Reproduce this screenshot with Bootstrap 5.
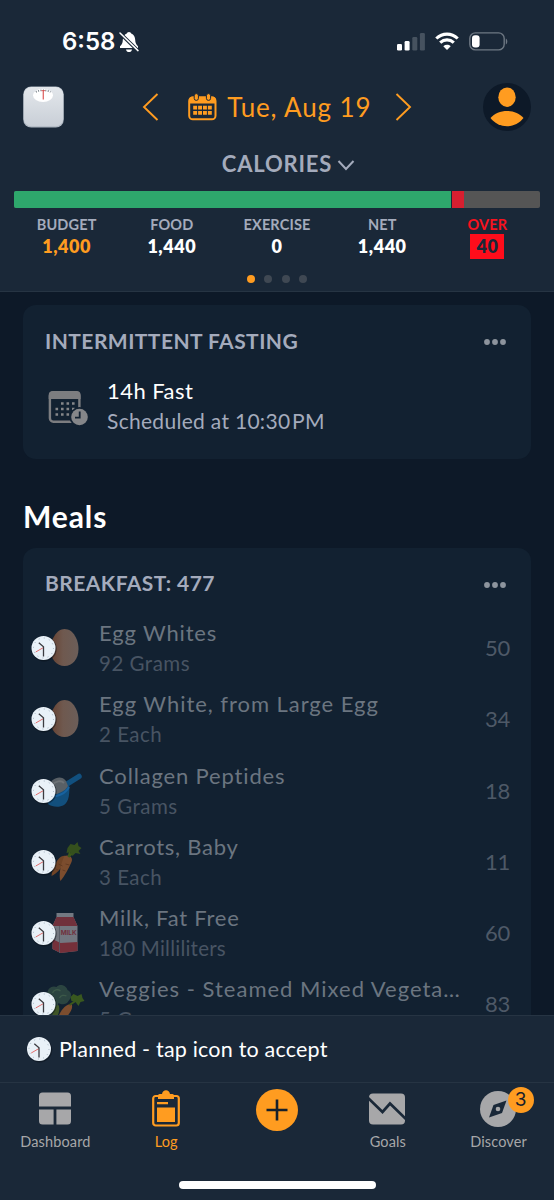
<!DOCTYPE html>
<html lang="en">
<head>
<meta charset="utf-8">
<meta name="viewport" content="width=device-width, initial-scale=1">
<title>Food Log</title>
<link href="https://cdn.jsdelivr.net/npm/bootstrap@5.3.0/dist/css/bootstrap.min.css" rel="stylesheet">
<style>
:root{--panel:#1a2838;--page:#0d1928;--tile:#122131;--orange:#ff9c20;--soft:#a4abbc;--grey:#a7a7a9}
body{font-family:Lato,"Open Sans",sans-serif;background:var(--page);color:#fff;height:1200px;white-space:nowrap}
svg{display:block;flex-shrink:0}
.panel{background:var(--panel)}
.topbar{height:292px;border-bottom:1px solid #263443}
.status{height:83px;padding:0 46px 0 62px}
.clock-time{font:600 24px/83px Inter,sans-serif}
.date-row{height:48px;padding:0 23px}
.date-text{font-size:26px;letter-spacing:.87px;color:var(--orange);line-height:48px}
.metric{height:30px;margin-top:18px;padding-left:23px;font-size:22px;font-weight:700;letter-spacing:.8px;line-height:30px;color:var(--soft)}
.budget{height:17px;margin:12px 14px 0;background:#555;border-radius:2px}
.budget .progress-bar{background:#2ea76c}
.budget .progress-bar+.progress-bar{background:#d71f30;border-left:1.5px solid var(--panel)}
.stats{margin:7px 14px 0;text-align:center}
.stat-label{font-size:14.5px;font-weight:700;line-height:19px;color:var(--soft);letter-spacing:.15px}
.stat-value{font-size:18px;font-weight:800;line-height:25px;letter-spacing:.55px}
.over{color:#f9121e}
.over-box{background:#ff0d1b;color:#1a2838;width:34px}
.pager i{width:8px;height:8px;border-radius:50%;background:#3f4853}
.pager i:first-child{background:var(--orange)}
.tile{background:var(--tile);border:0;border-radius:13px;color:inherit}
.tile-title{font-size:21px;font-weight:700;line-height:30px;color:var(--soft);letter-spacing:.45px}
.tile-more{margin-top:2px}
.fast-name{font-size:22px;line-height:30px;letter-spacing:.45px}
.fast-sub{font-size:21px;line-height:30px;letter-spacing:.3px;color:var(--soft)}
.meals-title{font-size:30px;font-weight:700;line-height:40px;letter-spacing:.9px}
.food{height:71.3px;padding:0 21px 0 8px}
.food-name{font-size:22px;line-height:30px;letter-spacing:.84px;color:#6b7580}
.food-sub{font-size:20.5px;line-height:30px;letter-spacing:.5px;color:#485463}
.food-cal{font-size:22px;line-height:30px;letter-spacing:-.2px;color:#4e5967}
.planned{height:68px;border-top:1px solid #263443;border-bottom:1px solid #263443;font-size:21.5px;letter-spacing:.2px;padding-left:25px}
.tab{flex:1;font-size:14.5px;line-height:20px;letter-spacing:.13px;color:var(--grey);text-decoration:none}
.tab.active{color:var(--orange)}
.tab-icon{height:49px;padding-top:2px;margin-left:-1px}
.count{position:absolute;left:28px;top:-4px;width:26px;height:26px;border-radius:50%;background:var(--orange);color:#16202b;font:19px/26px Inter,sans-serif;text-align:center}
.home-bar{width:197px;height:8px;border-radius:4px;background:#fff;margin:29px auto 0}
</style>
</head>
<body class="d-flex flex-column overflow-hidden">
<svg width="0" height="0" class="position-absolute" aria-hidden="true">
  <defs>
    <linearGradient id="eggFill"><stop offset="0" stop-color="#664131"/><stop offset=".45" stop-color="#6f594f"/><stop offset="1" stop-color="#6b5e59"/></linearGradient>
    <linearGradient id="scaleFill" x2="0" y2="1"><stop offset="0" stop-color="#e3e7eb"/><stop offset="1" stop-color="#c9cfd7"/></linearGradient>
    <symbol id="clock" viewBox="0 0 28 28">
      <circle cx="14.6" cy="14.8" r="12.6" fill="#060d16" opacity=".45"/>
      <circle cx="14" cy="14" r="12" fill="#e9f1f8"/>
      <circle cx="14" cy="14" r="10" fill="none" stroke="#9fb0bf" stroke-width="1" stroke-dasharray="1 4.236"/>
      <path d="M14 13.5 6.2 18" stroke="#e0605f" stroke-width=".9"/>
      <path d="M9.3 8.8 14 12.800V22.5" fill="none" stroke="#3b3b40" stroke-width="1.3"/>
    </symbol>
    <symbol id="egg" viewBox="0 0 56 52"><path d="M32 7C41 7 46 18 46 27C46 37 40 44 32 44C24 44 18 37 18 27C18 18 24 7 32 7Z" fill="url(#eggFill)"/></symbol>
    <symbol id="scoop" viewBox="0 0 56 52">
      <path d="M34 19 46 11.500" stroke="#11507f" stroke-width="5.5" stroke-linecap="round"/>
      <path d="M15 22 36 19C37 27 36 37 31 40C26 43 19 42 15 39Z" fill="#124f7d"/>
      <path d="M15 22C18 13 28 9 33 16L35 21C32 27 22 31 15 29Z" fill="#596066"/>
      <path d="M19 20C23 16 28 15 31 18" stroke="#6e7377" stroke-width="2" fill="none"/>
      <path d="M15 31C24 33 33 28 36 22" fill="none" stroke="#1762a0" stroke-width="2"/>
    </symbol>
    <symbol id="carrot" viewBox="0 0 56 52">
      <path d="M33 20C27 18 20 30 19 40C24 38 34 28 33 20Z" fill="#704426"/>
      <path d="M32 20C37 18 41 22 39 26C36 33 32 40 28 45C26 40 28 27 32 20Z" fill="#7c4d2e"/>
      <path d="M26 28l4 2M23 33l3 1M33 28l4 1M30 34l3 1" stroke="#5d3720" stroke-width=".8"/>
      <path d="M36 21 44 13M36 21 39 10" stroke="#3c581b" stroke-width="2"/>
      <path d="M35 12 38 8 42 9 45 6 46 10 49 12 46 15 48 18 43 17 40 20 38 16 34 17Z" fill="#35501d"/>
    </symbol>
    <symbol id="milk" viewBox="0 0 56 52">
      <path d="M24 6H41V10H24Z" fill="#737982"/>
      <path d="M24 10H41L45 19V44L28 46 20 42V19Z" fill="#737780"/>
      <path d="M24 10H41L45 19H27L20 19Z" fill="#70313c"/>
      <path d="M20 32 28 36 45 35V44L28 46 20 42Z" fill="#75303a"/>
      <path d="M27 19V46" stroke="#555965" stroke-width=".8"/>
      <text x="28.2" y="28" font-family="Inter, sans-serif" font-weight="700" font-size="6.3" fill="#70303c">MILK</text>
    </symbol>
    <symbol id="veg" viewBox="0 0 56 52">
      <path d="M15 17C14 11 19 7 24 9C28 5 34 8 35 12C40 14 39 20 36 23C34 27 29 27 26 25L22 40 17 37 19 26C16 24 14 21 15 17Z" fill="#2b4440"/>
      <path d="M20 15a5 5 0 0 1 8-2M27 20a5 5 0 0 1 7-2" fill="none" stroke="#3c5949" stroke-width="1.3"/>
      <path d="M20 40C20 32 22 27 26 27C28 31 26 37 23 42Z" fill="#3f5527"/>
      <path d="M25 42C27 33 33 26 39 26C42 31 34 40 27 46Z" fill="#7c4d2e"/>
      <path d="M37 27 46 21" stroke="#3c581b" stroke-width="2"/>
      <path d="M38 19 41 16 45 18 49 16 50 20 52 23 48 24 46 28 43 24 39 23Z" fill="#39581f"/>
    </symbol>
    <symbol id="more" viewBox="0 0 24 8"><g fill="#8d949d"><circle cx="4" cy="4" r="2.9"/><circle cx="12" cy="4" r="2.9"/><circle cx="20" cy="4" r="2.9"/></g></symbol>
  </defs>
</svg>

<header class="topbar panel flex-shrink-0">
  <div class="status d-flex align-items-center">
    <span class="clock-time">6:58</span>
    <svg style="margin-left:3px" width="22" height="22" viewBox="0 0 22 22">
      <path d="M11 1C12.3 1 13 1.8 13.2 2.6C16 3.5 17 6 17.2 9C17.3 12 18.2 13.5 20 15.2V17H2V15.2C4 13.5 4.7 12 4.8 9C5 6 6 3.5 8.8 2.6C9 1.8 9.7 1 11 1Z" fill="#fff"/>
      <path d="M8 18.4H14C13.6 20.4 12.5 21 11 21S8.4 20.4 8 18.4Z" fill="#fff"/>
      <path d="M1.8 2 20.5 20.2" stroke="#1a2838" stroke-width="3.6"/><path d="M2 2 20 19.6" stroke="#fff" stroke-width="1.5" stroke-linecap="round"/>
    </svg>
    <svg class="ms-auto" width="28" height="20" viewBox="0 0 28 20"><rect y="12" width="5" height="6.5" rx="1.3" fill="#fff"/><rect x="7.6" y="9" width="5" height="9.5" rx="1.3" fill="#fff"/><rect x="15.3" y="5" width="5" height="13.5" rx="1.3" fill="#46525f"/><rect x="22.9" y="1" width="5" height="17.5" rx="1.3" fill="#46525f"/></svg>
    <svg style="margin-left:10px" width="24" height="19" viewBox="0 0 24 19" fill="none" stroke="#fff" stroke-width="3.1"><path d="M1.3 6.5C7.5 .6 16.5 .6 22.7 6.5"/><path d="M5.2 10.6C9.2 6.9 14.8 6.9 18.8 10.6"/><path d="M12 18 8.3 14.2C10.5 12.3 13.5 12.3 15.7 14.2Z" fill="#fff" stroke="none"/></svg>
    <svg style="margin-left:10px" width="39" height="20" viewBox="0 0 39 20"><rect x=".8" y=".9" width="34.4" height="17" rx="5.6" fill="none" stroke="#6e7883" stroke-width="1.4"/><rect x="3" y="3.2" width="7.6" height="12.4" rx="3" fill="#fff"/><path d="M36.8 6.500C38.8 7.500 38.8 11.500 36.8 12.500Z" fill="#6e7883"/></svg>
  </div>
  <div class="date-row d-flex align-items-center justify-content-between">
    <svg width="41" height="42" viewBox="0 0 41 42">
      <rect x=".2" y=".5" width="40.6" height="41" rx="8" fill="#aeb7c1"/><rect x=".8" y="1" width="39.4" height="39.2" rx="7.5" fill="url(#scaleFill)"/>
      <ellipse cx="20" cy="9.3" rx="10" ry="6.6" fill="#fff"/>
      <path d="M13 6C16 3.8 24 3.8 27.5 6" fill="none" stroke="#69737c" stroke-width="1.6" stroke-dasharray=".9 1.5"/>
      <path d="M20.3 4.3V13.5" stroke="#df6868" stroke-width="1.3"/><path d="M18.4 4.6h3.8" stroke="#d14a4a" stroke-width=".8"/>
    </svg>
    <div class="d-flex align-items-center" style="margin-left:7px">
      <svg width="17" height="30" viewBox="0 0 17 30" fill="none" stroke="#ff9c20" stroke-width="1.9"><path d="M15.5 2 2 15 15.5 28"/></svg>
      <svg style="margin:0 10px 0 29.500px" width="29" height="28" viewBox="0 0 29 28">
        <rect x="1.2" y="4.5" width="26.3" height="21.8" rx="3.6" fill="none" stroke="#ff9c20" stroke-width="2"/>
        <path d="M1 10.500V7.5Q1 3.6 5 3.6H24Q28 3.6 28 7.5V10.500Z" fill="#ff9c20"/>
        <rect x="6.2" y=".6" width="4.2" height="6.8" rx="2.1" fill="#ff9c20" stroke="#1a2838"/><rect x="18.4" y=".6" width="4.2" height="6.8" rx="2.1" fill="#ff9c20" stroke="#1a2838"/>
        <path d="M5.2 14.7h18.6M5.2 19.9h18.6" stroke="#ff9c20" stroke-width="3.8" stroke-dasharray="3.9 1"/>
      </svg>
      <span class="date-text">Tue, Aug 19</span>
      <svg style="margin-left:24px" width="17" height="30" viewBox="0 0 17 30" fill="none" stroke="#ff9c20" stroke-width="1.9"><path d="M1.5 2 15 15 1.5 28"/></svg>
    </div>
    <svg width="48" height="48" viewBox="0 0 48 48"><circle cx="24" cy="24" r="24" fill="#0d1928"/><ellipse cx="24" cy="14.2" rx="8.7" ry="9.7" fill="#ff9c20"/><path d="M7.5 35C15 25.500 33 25.500 40.5 35C32 46 16 46 7.5 35Z" fill="#ff9c20"/></svg>
  </div>
  <div class="metric d-flex align-items-center justify-content-center">CALORIES
    <svg style="margin:2px 0 0 5px" width="18" height="12" viewBox="0 0 18 12" fill="none" stroke="#a4abbc" stroke-width="2"><path d="M1.5 2 9 10 16.5 2"/></svg>
  </div>
  <div class="budget progress"><div class="progress-bar" style="width:83.1%"></div><div class="progress-bar" style="width:2.5%"></div></div>
  <div class="stats d-flex">
    <div class="col"><div class="stat-label">BUDGET</div><div class="stat-value" style="color:var(--orange)">1,400</div></div>
    <div class="col"><div class="stat-label">FOOD</div><div class="stat-value">1,440</div></div>
    <div class="col"><div class="stat-label">EXERCISE</div><div class="stat-value">0</div></div>
    <div class="col"><div class="stat-label">NET</div><div class="stat-value">1,440</div></div>
    <div class="col"><div class="stat-label over">OVER</div><div class="stat-value over-box mx-auto">40</div></div>
  </div>
  <div class="pager d-flex justify-content-center" style="gap:9.4px;margin-top:16px"><i></i><i></i><i></i><i></i></div>
</header>

<main class="flex-grow-1 overflow-hidden" style="padding:13px 23px 0">
  <section class="card tile" style="height:154px;padding:21px 24px 0 22px">
    <div class="d-flex align-items-center justify-content-between"><span class="tile-title">INTERMITTENT FASTING</span><svg class="tile-more" width="24" height="8"><use href="#more"/></svg></div>
    <div class="d-flex align-items-center" style="margin-top:20px">
      <svg style="margin:3px 18px 0 2px" width="42" height="38" viewBox="0 0 42 38">
        <rect x="2.9" y="3.4" width="29.5" height="29.3" rx="3.5" fill="none" stroke="#7c7d80" stroke-width="2.4"/>
        <path d="M1.7 10V6Q1.7 2 6 2H29.5Q33.6 2 33.6 6V10Z" fill="#7c7d80"/>
        <g stroke="#858689" stroke-width="2.6" stroke-dasharray="2.6 2.9"><path d="M14 14.5h13.8M8.5 20h19.5M8.5 25.5h14"/></g>
        <circle cx="32.5" cy="28" r="10" fill="#122131"/><circle cx="32.5" cy="28" r="8.3" fill="#858689"/>
        <path d="M32.7 22.5V28.7H28" fill="none" stroke="#122131" stroke-width="1.8"/>
      </svg>
      <div><div class="fast-name">14h Fast</div><div class="fast-sub">Scheduled at 10:30&#8202;PM</div></div>
    </div>
  </section>
  <h2 class="meals-title mb-0" style="margin-top:37px">Meals</h2>
  <section class="card tile" style="margin-top:12px;padding-top:20px;height:600px">
    <div class="d-flex align-items-center justify-content-between" style="padding:0 24px 0 22px;margin-bottom:14.3px"><span class="tile-title">BREAKFAST: 477</span><svg style="margin-top:3px" width="24" height="8"><use href="#more"/></svg></div>
    <div class="food d-flex align-items-center"><svg class="me-2" width="60" height="52"><use href="#egg" x="1.500" width="56" height="52"/><use href="#clock" x="-1.5" y="12" width="28" height="28"/></svg><div class="flex-grow-1"><div class="food-name">Egg Whites</div><div class="food-sub">92 Grams</div></div><span class="food-cal">50</span></div>
    <div class="food d-flex align-items-center"><svg class="me-2" width="60" height="52"><use href="#egg" x="1.500" width="56" height="52"/><use href="#clock" x="-1.5" y="12" width="28" height="28"/></svg><div class="flex-grow-1"><div class="food-name" style="letter-spacing:.95px">Egg White, from Large Egg</div><div class="food-sub">2 Each</div></div><span class="food-cal">34</span></div>
    <div class="food d-flex align-items-center"><svg class="me-2" width="60" height="52"><use href="#scoop" x="2" width="56" height="52"/><use href="#clock" x="-1.5" y="12" width="28" height="28"/></svg><div class="flex-grow-1"><div class="food-name">Collagen Peptides</div><div class="food-sub">5 Grams</div></div><span class="food-cal">18</span></div>
    <div class="food d-flex align-items-center"><svg class="me-2" width="60" height="52"><use href="#carrot" x="1.500" width="56" height="52"/><use href="#clock" x="-1.5" y="12" width="28" height="28"/></svg><div class="flex-grow-1"><div class="food-name" style="letter-spacing:.74px">Carrots, Baby</div><div class="food-sub">3 Each</div></div><span class="food-cal">11</span></div>
    <div class="food d-flex align-items-center"><svg class="me-2" width="60" height="52"><use href="#milk" x="1.500" width="56" height="52"/><use href="#clock" x="-1.5" y="12" width="28" height="28"/></svg><div class="flex-grow-1"><div class="food-name" style="letter-spacing:.75px">Milk, Fat Free</div><div class="food-sub" style="letter-spacing:.23px">180 Milliliters</div></div><span class="food-cal">60</span></div>
    <div class="food d-flex align-items-center"><svg class="me-2" width="60" height="52"><use href="#veg" x="1.500" width="56" height="52"/><use href="#clock" x="-1.5" y="12" width="28" height="28"/></svg><div class="flex-grow-1"><div class="food-name" style="letter-spacing:1px">Veggies - Steamed Mixed Vegeta…</div><div class="food-sub">5 Grams</div></div><span class="food-cal">83</span></div>
  </section>
</main>

<footer class="panel flex-shrink-0" style="height:185px">
  <div class="planned d-flex align-items-center"><svg width="28" height="28"><use href="#clock"/></svg><span style="margin-left:6px">Planned - tap icon to accept</span></div>
  <nav class="d-flex text-center">
    <a class="tab" href="#"><div class="tab-icon d-flex justify-content-center align-items-center" style="margin-left:0"><svg width="32" height="33" viewBox="0 0 32 33" fill="#a7a7a9"><path d="M0 14.5V4Q0 .5 3.5 .5H28.5Q32 .5 32 4V14.5ZM0 17.5H14.6V32.5H3.5Q0 32.5 0 29ZM17.4 17.5H32V29Q32 32.5 28.5 32.5H17.4Z"/></svg></div>Dashboard</a>
    <a class="tab active" href="#"><div class="tab-icon d-flex justify-content-center align-items-center"><svg width="28" height="37" viewBox="0 0 28 37"><rect x="1.2" y="6" width="25.6" height="29.5" rx="2.5" fill="none" stroke="#ff9c20" stroke-width="2.2"/><path d="M6 9V5.5Q6 4 7.5 4H10C10.5 1.5 12 .3 14 .3S17.5 1.5 18 4H20.5Q22 4 22 5.5V9Z" fill="#ff9c20"/><path d="M5 12h11v2.2H5zM5 17.5h18v14.5H5z" fill="#ff9c20"/></svg></div>Log</a>
    <a class="tab" href="#" aria-label="Add"><div class="d-flex justify-content-center" style="padding-top:6px"><svg width="42" height="42" viewBox="0 0 42 42"><circle cx="21" cy="21" r="21" fill="#ff9c20"/><path d="M10.5 21h21M21 10.5v21" stroke="#16202b" stroke-width="2.6"/></svg></div></a>
    <a class="tab" href="#"><div class="tab-icon d-flex justify-content-center align-items-center" style="margin-left:-2px"><svg width="36" height="32" viewBox="0 0 36 32"><rect y=".5" width="36" height="31" rx="4" fill="#a7a7a9"/><path d="M-1 5 13.5 19 21 10.5 37 26" fill="none" stroke="#1a2838" stroke-width="2.7"/></svg></div>Goals</a>
    <a class="tab" href="#"><div class="tab-icon d-flex justify-content-center align-items-center" style="margin-left:-2px"><span class="position-relative"><svg width="36" height="36" viewBox="0 0 36 36"><circle cx="18" cy="18" r="18" fill="#a7a7a9"/><path d="M26.5 9.500 22 22 9 26.500 13.500 14Z" fill="#1a2838"/><circle cx="18" cy="18" r="2.3" fill="#a7a7a9"/></svg><span class="count">3</span></span></div>Discover</a>
  </nav>
  <div class="home-bar"></div>
</footer>
<script src="https://cdn.jsdelivr.net/npm/bootstrap@5.3.0/dist/js/bootstrap.bundle.min.js"></script>
</body>
</html>
